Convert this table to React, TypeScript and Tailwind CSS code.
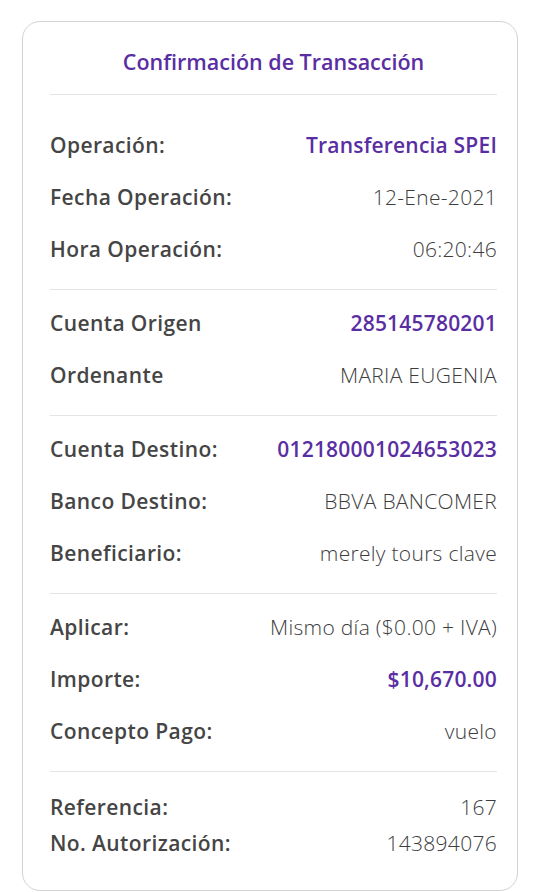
import React from "react";

type Row = { label: string; value: string; accent?: boolean };

const sections: Row[][] = [
  [
    { label: "Operación:", value: "Transferencia SPEI", accent: true },
    { label: "Fecha Operación:", value: "12-Ene-2021" },
    { label: "Hora Operación:", value: "06:20:46" },
  ],
  [
    { label: "Cuenta Origen", value: "285145780201", accent: true },
    { label: "Ordenante", value: "MARIA EUGENIA" },
  ],
  [
    { label: "Cuenta Destino:", value: "012180001024653023", accent: true },
    { label: "Banco Destino:", value: "BBVA BANCOMER" },
    { label: "Beneficiario:", value: "merely tours clave" },
  ],
  [
    { label: "Aplicar:", value: "Mismo día ($0.00 + IVA)" },
    { label: "Importe:", value: "$10,670.00", accent: true },
    { label: "Concepto Pago:", value: "vuelo" },
  ],
];

const footer: Row[] = [
  { label: "Referencia:", value: "167" },
  { label: "No. Autorización:", value: "143894076" },
];

function DetailRow({ row, tall = true }: { row: Row; tall?: boolean }) {
  return (
    <div className={`flex items-center justify-between ${tall ? "h-[52px]" : "h-[36px]"}`}>
      <span className="text-[21px] font-semibold tracking-[0.4px] text-[#454545]">{row.label}</span>
      <span
        className={
          row.accent
            ? "text-[21px] font-semibold tracking-[0.2px] text-[#5a2ea3]"
            : "text-[21px] font-light tracking-[0.3px] text-[#3d3d3d]"
        }
      >
        {row.value}
      </span>
    </div>
  );
}

export default function App() {
  return (
    <div
      className="min-h-[892px] w-[540px] bg-white pt-[21px] px-[22px]"
      style={{ fontFamily: '"Open Sans", "Noto Sans", sans-serif' }}
    >
      <div className="rounded-[18px] border border-[#d2d2d2] pl-[27px] pr-[20px] pb-[28px]">
        <div className="pt-[25px] pb-[17px] text-center text-[21.5px] font-semibold leading-[30px] text-[#5a2ea3] border-b border-[#e4e4e4]">
          Confirmación de Transacción
        </div>
        {sections.map((rows, i) => (
          <div
            key={i}
            className={`border-b border-[#e4e4e4] pb-[13px] ${i === 0 ? "pt-[25px]" : "pt-[8px]"}`}
          >
            {rows.map((r) => (
              <DetailRow key={r.label} row={r} />
            ))}
          </div>
        ))}
        <div className="pt-[18px]">
          {footer.map((r) => (
            <DetailRow key={r.label} row={r} tall={false} />
          ))}
        </div>
      </div>
    </div>
  );
}
